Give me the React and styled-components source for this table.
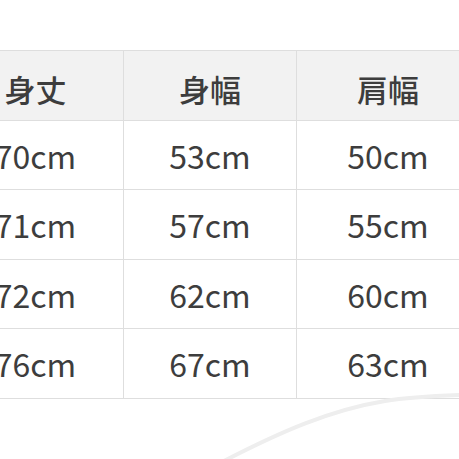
import React from "react";
import styled, { createGlobalStyle } from "styled-components";

const GlobalStyle = createGlobalStyle`
  html, body {
    margin: 0;
    padding: 0;
    background: #ffffff;
    overflow: hidden;
  }
`;

const Page = styled.div`
  position: relative;
  width: 459px;
  height: 459px;
  overflow: hidden;
  background: #fff;
  font-family: "Noto Sans CJK JP", "Noto Sans", sans-serif;
`;

const TableWrap = styled.div`
  padding-top: 50px;
  margin-left: -53px;
`;

const SizeTable = styled.table`
  border-collapse: collapse;
  table-layout: fixed;
  width: 532px;
`;

const Col = styled.col`
  width: ${(p) => p.$w}px;
`;

const Cell = styled.td`
  height: 68.5px;
  padding: 0;
  border: 1.5px solid #dedede;
  text-align: center;
  vertical-align: middle;
  font-size: 32px;
  font-weight: 400;
  color: #3d3d3d;
  line-height: 1;
  background: ${(p) => (p.$head ? "#f2f2f2" : "#ffffff")};
`;

const HeadText = styled.span`
  position: relative;
  top: 3px;
  font-size: 31px;
  font-weight: 500;
`;

const Swoosh = styled.svg`
  position: absolute;
  left: 0;
  top: 0;
  pointer-events: none;
`;

const head = ["身丈", "身幅", "肩幅"];
const rows = [
  ["70cm", "53cm", "50cm"],
  ["71cm", "57cm", "55cm"],
  ["72cm", "62cm", "60cm"],
  ["76cm", "67cm", "63cm"],
];

const App = () => {
  return (
    <Page>
      <GlobalStyle />
      <TableWrap>
        <SizeTable>
          <colgroup>
            <Col $w={176} />
            <Col $w={173} />
            <Col $w={183} />
          </colgroup>
          <tbody>
            <tr>
              {head.map((h) => (
                <Cell as="th" key={h} $head>
                  <HeadText>{h}</HeadText>
                </Cell>
              ))}
            </tr>
            {rows.map((r, i) => (
              <tr key={i}>
                {r.map((v, j) => (
                  <Cell key={j}>{v}</Cell>
                ))}
              </tr>
            ))}
          </tbody>
        </SizeTable>
      </TableWrap>
      <Swoosh width="459" height="459" viewBox="0 0 459 459">
        <path
          d="M222 462 C 280 432, 330 410, 385 401 C 410 397, 435 396, 462 395"
          fill="none"
          stroke="#eeeeee"
          strokeWidth="4"
          strokeLinecap="round"
        />
      </Swoosh>
    </Page>
  );
};

export default App;
